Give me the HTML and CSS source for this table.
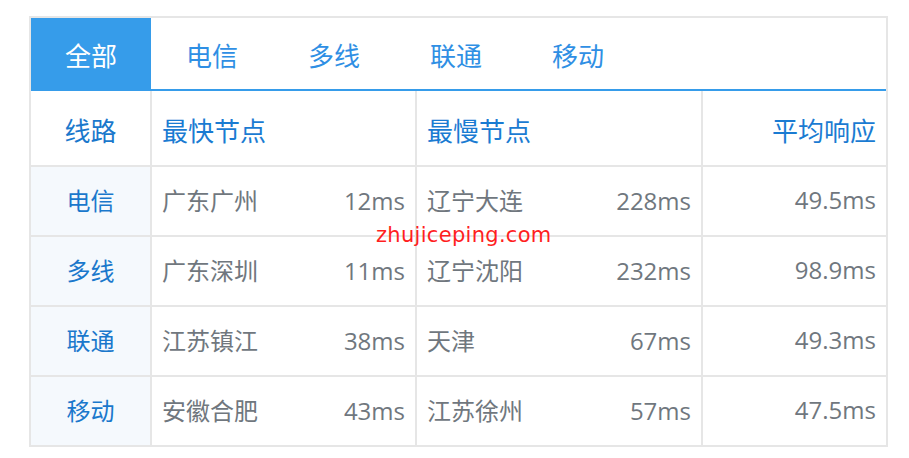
FILE: index.html
```html
<!DOCTYPE html>
<html lang="zh-CN">
<head>
  <meta charset="UTF-8" />
  <meta name="viewport" content="width=device-width, initial-scale=1.0"/>
  <title>线路测速</title>
  <link rel="stylesheet" href="styles.css">
</head>
<body>
  <div class="panel">
    <div class="tabs">
      <div class="tab active">全部</div>
      <div class="tab">电信</div>
      <div class="tab">多线</div>
      <div class="tab">联通</div>
      <div class="tab">移动</div>
    </div>

    <table class="speed">
      <colgroup>
        <col class="c-line">
        <col class="c-fast">
        <col class="c-slow">
        <col class="c-avg">
      </colgroup>
      <tr class="head">
        <th class="line">线路</th>
        <th>最快节点</th>
        <th>最慢节点</th>
        <th class="avg">平均响应</th>
      </tr>
      <tr>
        <td class="line">电信</td>
        <td><div class="node"><span>广东广州</span><span class="ms">12ms</span></div></td>
        <td><div class="node"><span>辽宁大连</span><span class="ms">228ms</span></div></td>
        <td class="avg">49.5ms</td>
      </tr>
      <tr>
        <td class="line">多线</td>
        <td><div class="node"><span>广东深圳</span><span class="ms">11ms</span></div></td>
        <td><div class="node"><span>辽宁沈阳</span><span class="ms">232ms</span></div></td>
        <td class="avg">98.9ms</td>
      </tr>
      <tr>
        <td class="line">联通</td>
        <td><div class="node"><span>江苏镇江</span><span class="ms">38ms</span></div></td>
        <td><div class="node"><span>天津</span><span class="ms">67ms</span></div></td>
        <td class="avg">49.3ms</td>
      </tr>
      <tr>
        <td class="line">移动</td>
        <td><div class="node"><span>安徽合肥</span><span class="ms">43ms</span></div></td>
        <td><div class="node"><span>江苏徐州</span><span class="ms">57ms</span></div></td>
        <td class="avg">47.5ms</td>
      </tr>
    </table>

    <div class="watermark">zhujiceping.com</div>
  </div>
</body>
</html>
```

FILE: styles.css
```css
body {
  margin: 0;
  padding: 16px 0 0 29px;
  background: #fff;
  font-family: "Open Sans", "Noto Sans CJK SC", sans-serif;
}

.panel {
  position: relative;
  width: 859px;
  box-sizing: border-box;
  border: 2px solid #e6e6e6;
  background: #fff;
}

.tabs {
  display: flex;
  height: 71px;
  border-bottom: 2px solid #369cea;
}

.tab {
  width: 122px;
  padding-top: 5px;
  line-height: 66px;
  text-align: center;
  font-size: 26px;
  color: #2f8fe4;
}

.tab.active {
  width: 120px;
  background: #369cea;
  color: #fff;
}

.speed {
  width: 100%;
  border-collapse: collapse;
  border-style: hidden;
  table-layout: fixed;
}

.c-line { width: 120px; }
.c-fast { width: 265px; }
.c-slow { width: 286px; }
.c-avg  { width: 184px; }

th, td {
  border: 2px solid #e6e6e6;
  padding: 0 10px;
  text-align: left;
  font-weight: normal;
}

th {
  height: 71px;
  padding-top: 3px;
  font-size: 26px;
  color: #1a7bd2;
}

td {
  height: 64px;
  padding-bottom: 4px;
  font-size: 24px;
  color: #70777e;
}

.line {
  text-align: center;
  color: #1a78cc;
  background: #f5f9fd;
}

.head .line {
  background: #fff;
}

.avg {
  text-align: right;
}

.node {
  display: flex;
  justify-content: space-between;
}

.ms {
  padding-top: 2px;
}

.watermark {
  position: absolute;
  left: 345px;
  top: 205px;
  font-family: "DejaVu Sans", sans-serif;
  font-size: 21px;
  letter-spacing: 0.3px;
  color: #ff1f1f;
}
```
